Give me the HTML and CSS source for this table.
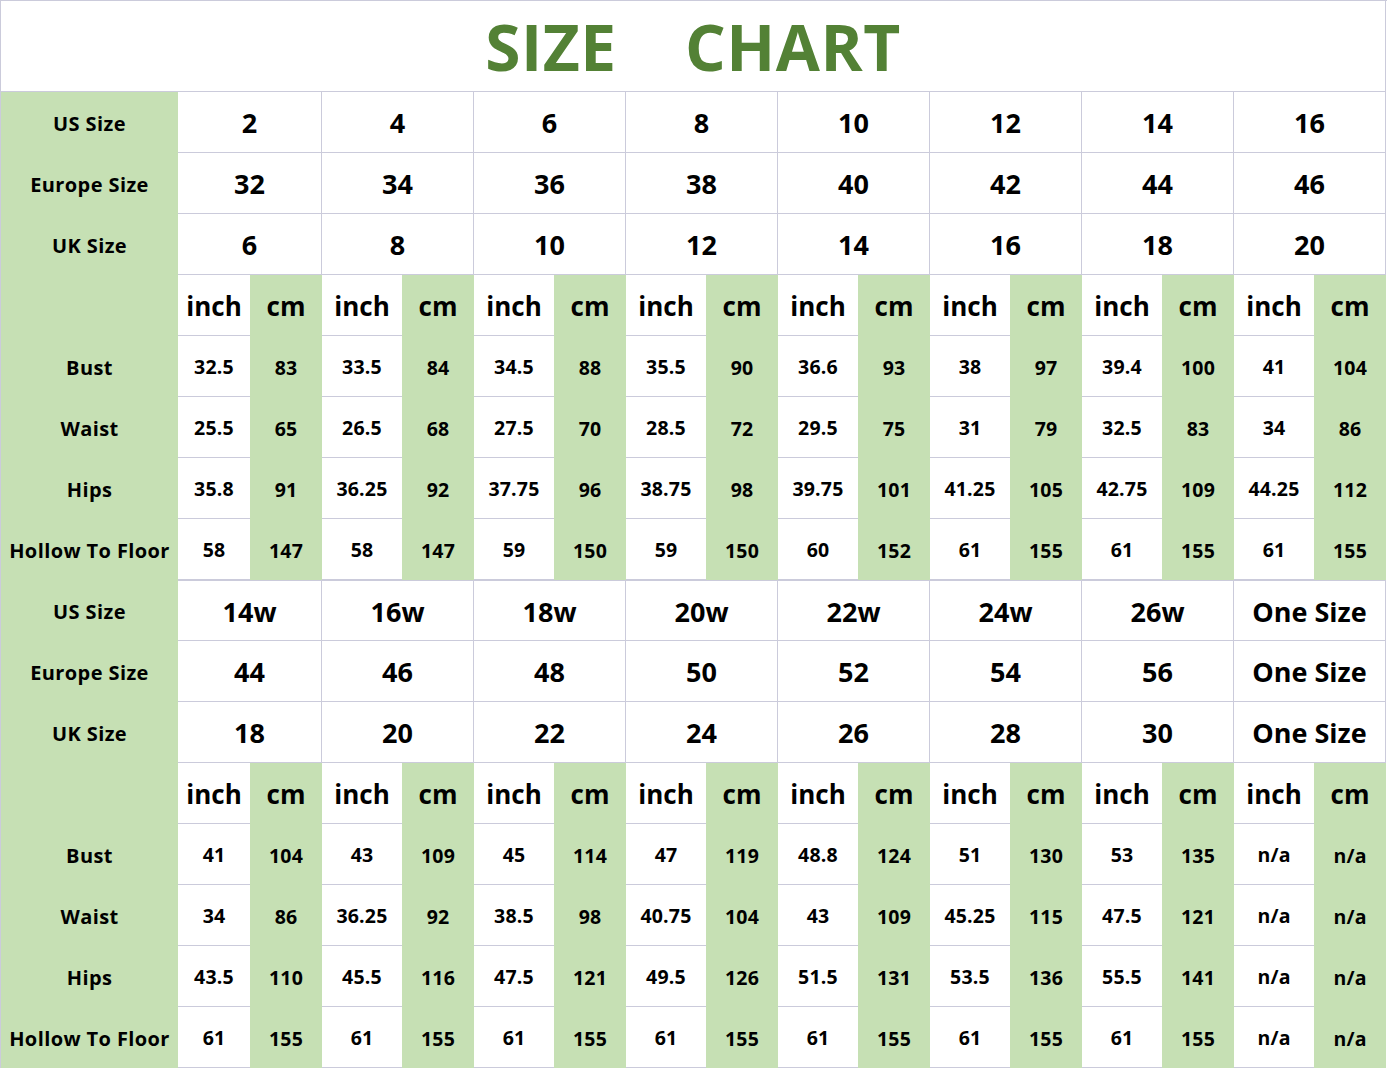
FILE: index.html
```html
<!DOCTYPE html>
<html>
<head>
<meta charset="utf-8">
<title>Size Chart</title>
<link rel="stylesheet" href="styles.css">
</head>
<body>
<div class="chart">
  <div class="title">SIZE&nbsp;&nbsp;&nbsp;&nbsp;CHART</div>

  <div class="label">US Size</div>
  <div class="size">2</div><div class="size">4</div><div class="size">6</div><div class="size">8</div><div class="size">10</div><div class="size">12</div><div class="size">14</div><div class="size">16</div>
  <div class="label">Europe Size</div>
  <div class="size">32</div><div class="size">34</div><div class="size">36</div><div class="size">38</div><div class="size">40</div><div class="size">42</div><div class="size">44</div><div class="size">46</div>
  <div class="label">UK Size</div>
  <div class="size">6</div><div class="size">8</div><div class="size">10</div><div class="size">12</div><div class="size">14</div><div class="size">16</div><div class="size">18</div><div class="size">20</div>
  <div class="label"></div>
  <div class="unit inch">inch</div><div class="unit cm">cm</div><div class="unit inch">inch</div><div class="unit cm">cm</div><div class="unit inch">inch</div><div class="unit cm">cm</div><div class="unit inch">inch</div><div class="unit cm">cm</div><div class="unit inch">inch</div><div class="unit cm">cm</div><div class="unit inch">inch</div><div class="unit cm">cm</div><div class="unit inch">inch</div><div class="unit cm">cm</div><div class="unit inch">inch</div><div class="unit cm">cm</div>
  <div class="label">Bust</div>
  <div class="val inch">32.5</div><div class="val cm">83</div><div class="val inch">33.5</div><div class="val cm">84</div><div class="val inch">34.5</div><div class="val cm">88</div><div class="val inch">35.5</div><div class="val cm">90</div><div class="val inch">36.6</div><div class="val cm">93</div><div class="val inch">38</div><div class="val cm">97</div><div class="val inch">39.4</div><div class="val cm">100</div><div class="val inch">41</div><div class="val cm">104</div>
  <div class="label">Waist</div>
  <div class="val inch">25.5</div><div class="val cm">65</div><div class="val inch">26.5</div><div class="val cm">68</div><div class="val inch">27.5</div><div class="val cm">70</div><div class="val inch">28.5</div><div class="val cm">72</div><div class="val inch">29.5</div><div class="val cm">75</div><div class="val inch">31</div><div class="val cm">79</div><div class="val inch">32.5</div><div class="val cm">83</div><div class="val inch">34</div><div class="val cm">86</div>
  <div class="label">Hips</div>
  <div class="val inch">35.8</div><div class="val cm">91</div><div class="val inch">36.25</div><div class="val cm">92</div><div class="val inch">37.75</div><div class="val cm">96</div><div class="val inch">38.75</div><div class="val cm">98</div><div class="val inch">39.75</div><div class="val cm">101</div><div class="val inch">41.25</div><div class="val cm">105</div><div class="val inch">42.75</div><div class="val cm">109</div><div class="val inch">44.25</div><div class="val cm">112</div>
  <div class="label">Hollow To Floor</div>
  <div class="val inch">58</div><div class="val cm">147</div><div class="val inch">58</div><div class="val cm">147</div><div class="val inch">59</div><div class="val cm">150</div><div class="val inch">59</div><div class="val cm">150</div><div class="val inch">60</div><div class="val cm">152</div><div class="val inch">61</div><div class="val cm">155</div><div class="val inch">61</div><div class="val cm">155</div><div class="val inch">61</div><div class="val cm">155</div>

  <div class="label">US Size</div>
  <div class="size top">14w</div><div class="size top">16w</div><div class="size top">18w</div><div class="size top">20w</div><div class="size top">22w</div><div class="size top">24w</div><div class="size top">26w</div><div class="size top">One Size</div>
  <div class="label">Europe Size</div>
  <div class="size">44</div><div class="size">46</div><div class="size">48</div><div class="size">50</div><div class="size">52</div><div class="size">54</div><div class="size">56</div><div class="size">One Size</div>
  <div class="label">UK Size</div>
  <div class="size">18</div><div class="size">20</div><div class="size">22</div><div class="size">24</div><div class="size">26</div><div class="size">28</div><div class="size">30</div><div class="size">One Size</div>
  <div class="label"></div>
  <div class="unit inch">inch</div><div class="unit cm">cm</div><div class="unit inch">inch</div><div class="unit cm">cm</div><div class="unit inch">inch</div><div class="unit cm">cm</div><div class="unit inch">inch</div><div class="unit cm">cm</div><div class="unit inch">inch</div><div class="unit cm">cm</div><div class="unit inch">inch</div><div class="unit cm">cm</div><div class="unit inch">inch</div><div class="unit cm">cm</div><div class="unit inch">inch</div><div class="unit cm">cm</div>
  <div class="label">Bust</div>
  <div class="val inch">41</div><div class="val cm">104</div><div class="val inch">43</div><div class="val cm">109</div><div class="val inch">45</div><div class="val cm">114</div><div class="val inch">47</div><div class="val cm">119</div><div class="val inch">48.8</div><div class="val cm">124</div><div class="val inch">51</div><div class="val cm">130</div><div class="val inch">53</div><div class="val cm">135</div><div class="val inch">n/a</div><div class="val cm">n/a</div>
  <div class="label">Waist</div>
  <div class="val inch">34</div><div class="val cm">86</div><div class="val inch">36.25</div><div class="val cm">92</div><div class="val inch">38.5</div><div class="val cm">98</div><div class="val inch">40.75</div><div class="val cm">104</div><div class="val inch">43</div><div class="val cm">109</div><div class="val inch">45.25</div><div class="val cm">115</div><div class="val inch">47.5</div><div class="val cm">121</div><div class="val inch">n/a</div><div class="val cm">n/a</div>
  <div class="label">Hips</div>
  <div class="val inch">43.5</div><div class="val cm">110</div><div class="val inch">45.5</div><div class="val cm">116</div><div class="val inch">47.5</div><div class="val cm">121</div><div class="val inch">49.5</div><div class="val cm">126</div><div class="val inch">51.5</div><div class="val cm">131</div><div class="val inch">53.5</div><div class="val cm">136</div><div class="val inch">55.5</div><div class="val cm">141</div><div class="val inch">n/a</div><div class="val cm">n/a</div>
  <div class="label">Hollow To Floor</div>
  <div class="val inch">61</div><div class="val cm">155</div><div class="val inch">61</div><div class="val cm">155</div><div class="val inch">61</div><div class="val cm">155</div><div class="val inch">61</div><div class="val cm">155</div><div class="val inch">61</div><div class="val cm">155</div><div class="val inch">61</div><div class="val cm">155</div><div class="val inch">61</div><div class="val cm">155</div><div class="val inch">n/a</div><div class="val cm">n/a</div>
</div>
</body>
</html>
```

FILE: styles.css
```css
html, body {
  margin: 0;
  padding: 0;
  background: #ffffff;
}

.chart {
  display: grid;
  grid-template-columns: 177px 72px 72px repeat(7, 80px 72px);
  grid-template-rows: 91px repeat(16, 61px);
  width: 1386px;
  border-top: 1px solid #cbcbdb;
  border-left: 1px solid #cbcbdb;
  font-family: "Open Sans", "Noto Sans", sans-serif;
  font-weight: 700;
  color: #000;
}

.chart > div {
  box-sizing: border-box;
  display: flex;
  align-items: center;
  justify-content: center;
  white-space: nowrap;
}

.title {
  grid-column: 1 / -1;
  background: #fff;
  border-right: 1px solid #cbcbdb;
  border-bottom: 1px solid #cbcbdb;
  color: #538135;
  font-size: 64px;
  letter-spacing: 0.5px;
}

.label {
  background: #c6e0b4;
  font-size: 20px;
  letter-spacing: 0.4px;
  padding-top: 1px;
}

.size {
  grid-column: span 2;
  background: #fff;
  border-right: 1px solid #cbcbdb;
  border-bottom: 1px solid #cbcbdb;
  font-size: 27px;
  padding-top: 1px;
}

.size.top {
  border-top: 1px solid #cbcbdb;
}

.unit {
  font-size: 26px;
  padding-top: 1px;
}

.val {
  font-size: 19.5px;
  letter-spacing: 0.2px;
  padding-top: 1px;
}

.inch {
  background: #fff;
  border-bottom: 1px solid #cbcbdb;
}

.cm {
  background: #c6e0b4;
}
```
